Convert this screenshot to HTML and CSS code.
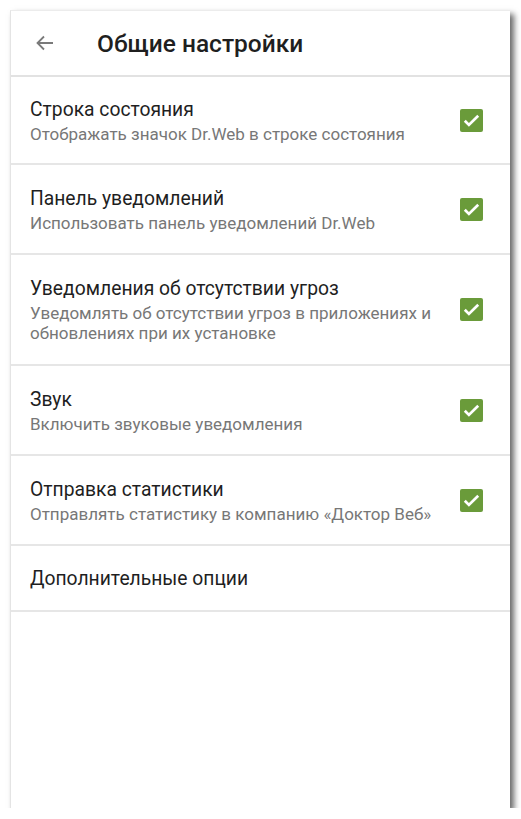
FILE: index.html
```html
<!DOCTYPE html>
<html lang="ru">
<head>
<meta charset="utf-8">
<link rel="stylesheet" href="styles.css">
</head>
<body>
<div class="screen">
  <header class="appbar">
    <svg class="back" width="24" height="24" viewBox="0 0 24 24"><path d="M20 12H5M11 5.5L4.5 12l6.5 6.5" fill="none" stroke="#7a7a7a" stroke-width="1.8"/></svg>
    <h1 class="title">Общие настройки</h1>
  </header>
  <ul class="list">
    <li class="item first">
      <div class="text">
        <div class="name">Строка состояния</div>
        <div class="desc">Отображать значок Dr.Web в строке состояния</div>
      </div>
      <span class="check"><svg viewBox="0 0 24 24" width="23" height="23"><path d="M5 12.3l4.3 4.3L19 7" fill="none" stroke="#fff" stroke-width="2.8"/></svg></span>
    </li>
    <li class="item">
      <div class="text">
        <div class="name">Панель уведомлений</div>
        <div class="desc">Использовать панель уведомлений Dr.Web</div>
      </div>
      <span class="check"><svg viewBox="0 0 24 24" width="23" height="23"><path d="M5 12.3l4.3 4.3L19 7" fill="none" stroke="#fff" stroke-width="2.8"/></svg></span>
    </li>
    <li class="item tall">
      <div class="text">
        <div class="name">Уведомления об отсутствии угроз</div>
        <div class="desc">Уведомлять об отсутствии угроз в приложениях и обновлениях при их установке</div>
      </div>
      <span class="check"><svg viewBox="0 0 24 24" width="23" height="23"><path d="M5 12.3l4.3 4.3L19 7" fill="none" stroke="#fff" stroke-width="2.8"/></svg></span>
    </li>
    <li class="item">
      <div class="text">
        <div class="name">Звук</div>
        <div class="desc">Включить звуковые уведомления</div>
      </div>
      <span class="check"><svg viewBox="0 0 24 24" width="23" height="23"><path d="M5 12.3l4.3 4.3L19 7" fill="none" stroke="#fff" stroke-width="2.8"/></svg></span>
    </li>
    <li class="item">
      <div class="text">
        <div class="name">Отправка статистики</div>
        <div class="desc">Отправлять статистику в компанию «Доктор Веб»</div>
      </div>
      <span class="check"><svg viewBox="0 0 24 24" width="23" height="23"><path d="M5 12.3l4.3 4.3L19 7" fill="none" stroke="#fff" stroke-width="2.8"/></svg></span>
    </li>
    <li class="item short">
      <div class="text">
        <div class="name">Дополнительные опции</div>
      </div>
    </li>
  </ul>
</div>
</body>
</html>
```

FILE: styles.css
```css
html, body {
  margin: 0;
  padding: 0;
  background: #fff;
}
body {
  padding: 10px 0 0 10px;
  font-family: Roboto, "Noto Sans", sans-serif;
}
.screen {
  width: 500px;
  height: 798px;
  background: #fff;
  border-left: 1px solid #e4e4e4;
  border-top: 1px solid #ececec;
  box-sizing: border-box;
  box-shadow: 4px 4px 6px rgba(0, 0, 0, 0.6);
}
.appbar {
  height: 64px;
  display: flex;
  align-items: center;
  border-bottom: 2px solid #e2e2e2;
}
.back {
  margin-left: 22px;
}
.title {
  margin: 0 0 0 40px;
  font-size: 24.5px;
  font-weight: 500;
  color: #1f1f1f;
}
.list {
  list-style: none;
  margin: 0;
  padding: 0;
}
.item {
  display: flex;
  align-items: center;
  height: 88px;
  padding: 0 27px 0 19px;
  border-bottom: 2px solid #e6e6e6;
}
.item.first { height: 86px; }
.item.tall { height: 109px; }
.item.short { height: 64px; }
.text {
  flex: 1;
}
.name {
  font-size: 19.3px;
  color: #1f1f1f;
  line-height: 25px;
}
.desc {
  font-size: 17px;
  color: #777;
  line-height: 20px;
  margin-top: 2px;
  padding-right: 10px;
}
.check {
  width: 23px;
  height: 23px;
  border-radius: 2px;
  background: #6a9b3a;
  display: flex;
}
```
